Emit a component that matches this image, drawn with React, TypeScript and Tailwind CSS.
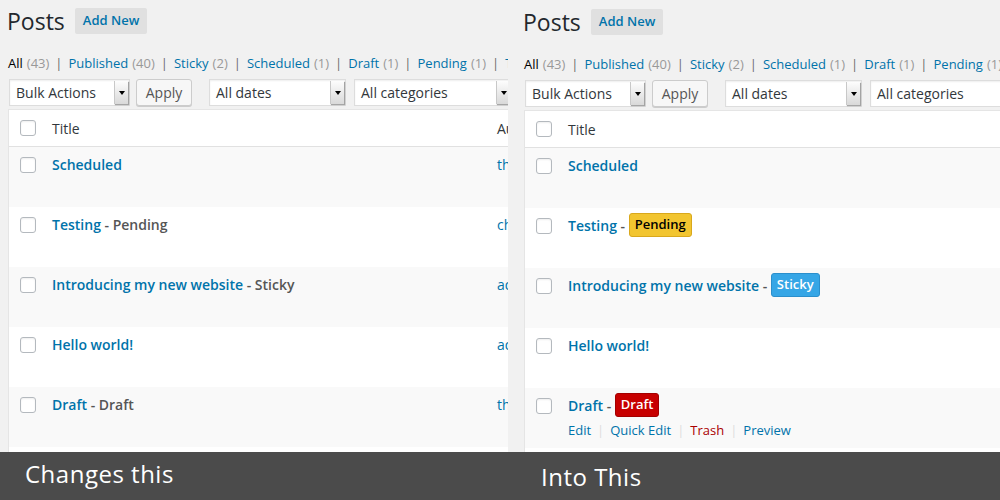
import React from 'react';

type Row = {
  title: string;
  state?: 'Pending' | 'Sticky' | 'Draft';
  author: string;
  actions?: boolean;
};

const rows: Row[] = [
  { title: 'Scheduled', author: 'thomas' },
  { title: 'Testing', state: 'Pending', author: 'chris' },
  { title: 'Introducing my new website', state: 'Sticky', author: 'admin' },
  { title: 'Hello world!', author: 'admin' },
  { title: 'Draft', state: 'Draft', author: 'thomas', actions: true },
];

const statuses = [
  { label: 'All', count: 43, current: true },
  { label: 'Published', count: 40 },
  { label: 'Sticky', count: 2 },
  { label: 'Scheduled', count: 1 },
  { label: 'Draft', count: 1 },
  { label: 'Pending', count: 1 },
  { label: 'Trash', count: 2 },
];

const badgeClass: Record<string, string> = {
  Pending: 'bg-[#f2c530] border-[#d9a81c] text-black',
  Sticky: 'bg-[#36a6e6] border-[#2b8fcc] text-white',
  Draft: 'bg-[#c70000] border-[#a30000] text-white',
};

function Checkbox() {
  return <span className="block w-4 h-4 rounded-[3px] border border-[#b4b9be] bg-white shadow-[inset_0_1px_2px_rgba(0,0,0,0.07)]" />;
}

function Select({ label, width }: { label: string; width: string }) {
  return (
    <div className={`flex h-[27px] border border-[#dddddd] bg-white shadow-[inset_0_1px_2px_rgba(0,0,0,0.07)] ${width}`}>
      <span className="flex-1 pl-[6px] text-[14px] leading-[25px] text-[#32373c] whitespace-nowrap overflow-hidden">{label}</span>
      <span className="w-[14px] my-px mr-px flex items-center justify-center bg-gradient-to-b from-[#fdfdfd] to-[#d9d9d9] border-l border-[#c8c8c8] shadow-[1px_1px_1px_rgba(0,0,0,0.35)]">
        <span className="block w-0 h-0 border-l-[3px] border-r-[3px] border-t-[4px] border-l-transparent border-r-transparent border-t-black" />
      </span>
    </div>
  );
}

function Panel({ fancy }: { fancy: boolean }) {
  return (
    <div className="w-[820px] font-['Open_Sans',sans-serif]">
      {/* Heading */}
      <div className="flex items-center h-[26px] mt-2">
        <h1 className="text-[23px] leading-[26px] text-[#23282d] font-normal -ml-px">Posts</h1>
        <span className="ml-[10px] h-[26px] px-2 flex items-center rounded-[2px] bg-[#e0e0e0] text-[13px] font-semibold text-[#0073aa]">Add New</span>
      </div>

      {/* Status links */}
      <div className="mt-5 h-[18px] flex items-center text-[13px] leading-[18px] whitespace-nowrap">
        {statuses.map((s, i) => (
          <span key={s.label} className="flex items-center">
            {i > 0 && <span className="mx-[6px] text-[#6b6b6b]">|</span>}
            <span className={s.current ? 'text-black' : 'text-[#0073aa]'}>{s.label}</span>
            <span className="ml-1 text-[#999]">({s.count})</span>
          </span>
        ))}
      </div>

      {/* Filters */}
      <div className="mt-[7px] flex items-center h-[27px]">
        <div className="ml-px"><Select label="Bulk Actions" width="w-[121px]" /></div>
        <span className="ml-[6px] h-[27px] w-[56px] flex items-center justify-center rounded-[3px] border border-[#cccccc] bg-[#f7f7f7] shadow-[0_1px_0_#cccccc] text-[14px] text-[#555]">Apply</span>
        <div className="ml-[17px]"><Select label="All dates" width="w-[137px]" /></div>
        <div className="ml-[8px]"><Select label="All categories" width="w-[158px]" /></div>
      </div>

      {/* Table */}
      <div className="mt-[3px] border border-[#e5e5e5] bg-white">
        <div className="flex items-center h-[37px] border-b border-[#e1e1e1]">
          <div className="w-[43px] pl-[11px]"><Checkbox /></div>
          <div className="w-[445px] text-[14px] text-[#32373c]">Title</div>
          <div className="text-[14px] text-[#32373c]">Author</div>
        </div>
        {rows.map((r, i) => (
          <div key={r.title} className={`flex items-start h-[60px] ${i % 2 === 0 ? 'bg-[#f9f9f9]' : 'bg-white'}`}>
            <div className="w-[43px] pl-[11px] pt-[10px]"><Checkbox /></div>
            <div className="w-[445px] pt-[7px]">
              <div className="flex items-center h-[20px] text-[14px] font-semibold whitespace-nowrap">
                <span className="text-[#0073aa]">{r.title}</span>
                {r.state && !fancy && <span className="text-[#555]">&nbsp;- {r.state}</span>}
                {r.state && fancy && (
                  <>
                    <span className="text-[#555]">&nbsp;-&nbsp;</span>
                    <span className={`h-[24px] px-[5px] flex items-center rounded-[3px] border text-[13px] font-semibold ${badgeClass[r.state]}`}>{r.state}</span>
                  </>
                )}
              </div>
              {r.actions && fancy && (
                <div className="mt-[6px] flex items-center text-[13px] leading-[18px] whitespace-nowrap">
                  <span className="text-[#0073aa]">Edit</span>
                  <span className="mx-[6px] text-[#ddd]">|</span>
                  <span className="text-[#0073aa]">Quick Edit</span>
                  <span className="mx-[6px] text-[#ddd]">|</span>
                  <span className="text-[#a00]">Trash</span>
                  <span className="mx-[6px] text-[#ddd]">|</span>
                  <span className="text-[#0073aa]">Preview</span>
                </div>
              )}
            </div>
            <div className="pt-[8px] text-[14px] leading-[20px] text-[#0073aa]">{r.author}</div>
          </div>
        ))}
        {/* next row, mostly hidden under the caption bar */}
        <div className="h-[60px] bg-white" />
      </div>
    </div>
  );
}

export default function App() {
  return (
    <div className="w-[1000px] h-[500px] bg-[#f1f1f1] flex flex-col overflow-hidden">
      <div className="flex flex-1 overflow-hidden">
        <div className="w-[508px] shrink-0 overflow-hidden pl-2">
          <Panel fancy={false} />
        </div>
        <div className="flex-1 overflow-hidden pl-4 pt-px">
          <Panel fancy={true} />
        </div>
      </div>
      <div className="h-[48px] shrink-0 flex bg-[#4b4b4b] text-white font-['Open_Sans',sans-serif] text-[24px] tracking-[0.5px]">
        <div className="w-[516px] pl-[25px] pt-[4px]">Changes this</div>
        <div className="flex-1 pl-[25px] pt-[7px]">Into This</div>
      </div>
    </div>
  );
}
